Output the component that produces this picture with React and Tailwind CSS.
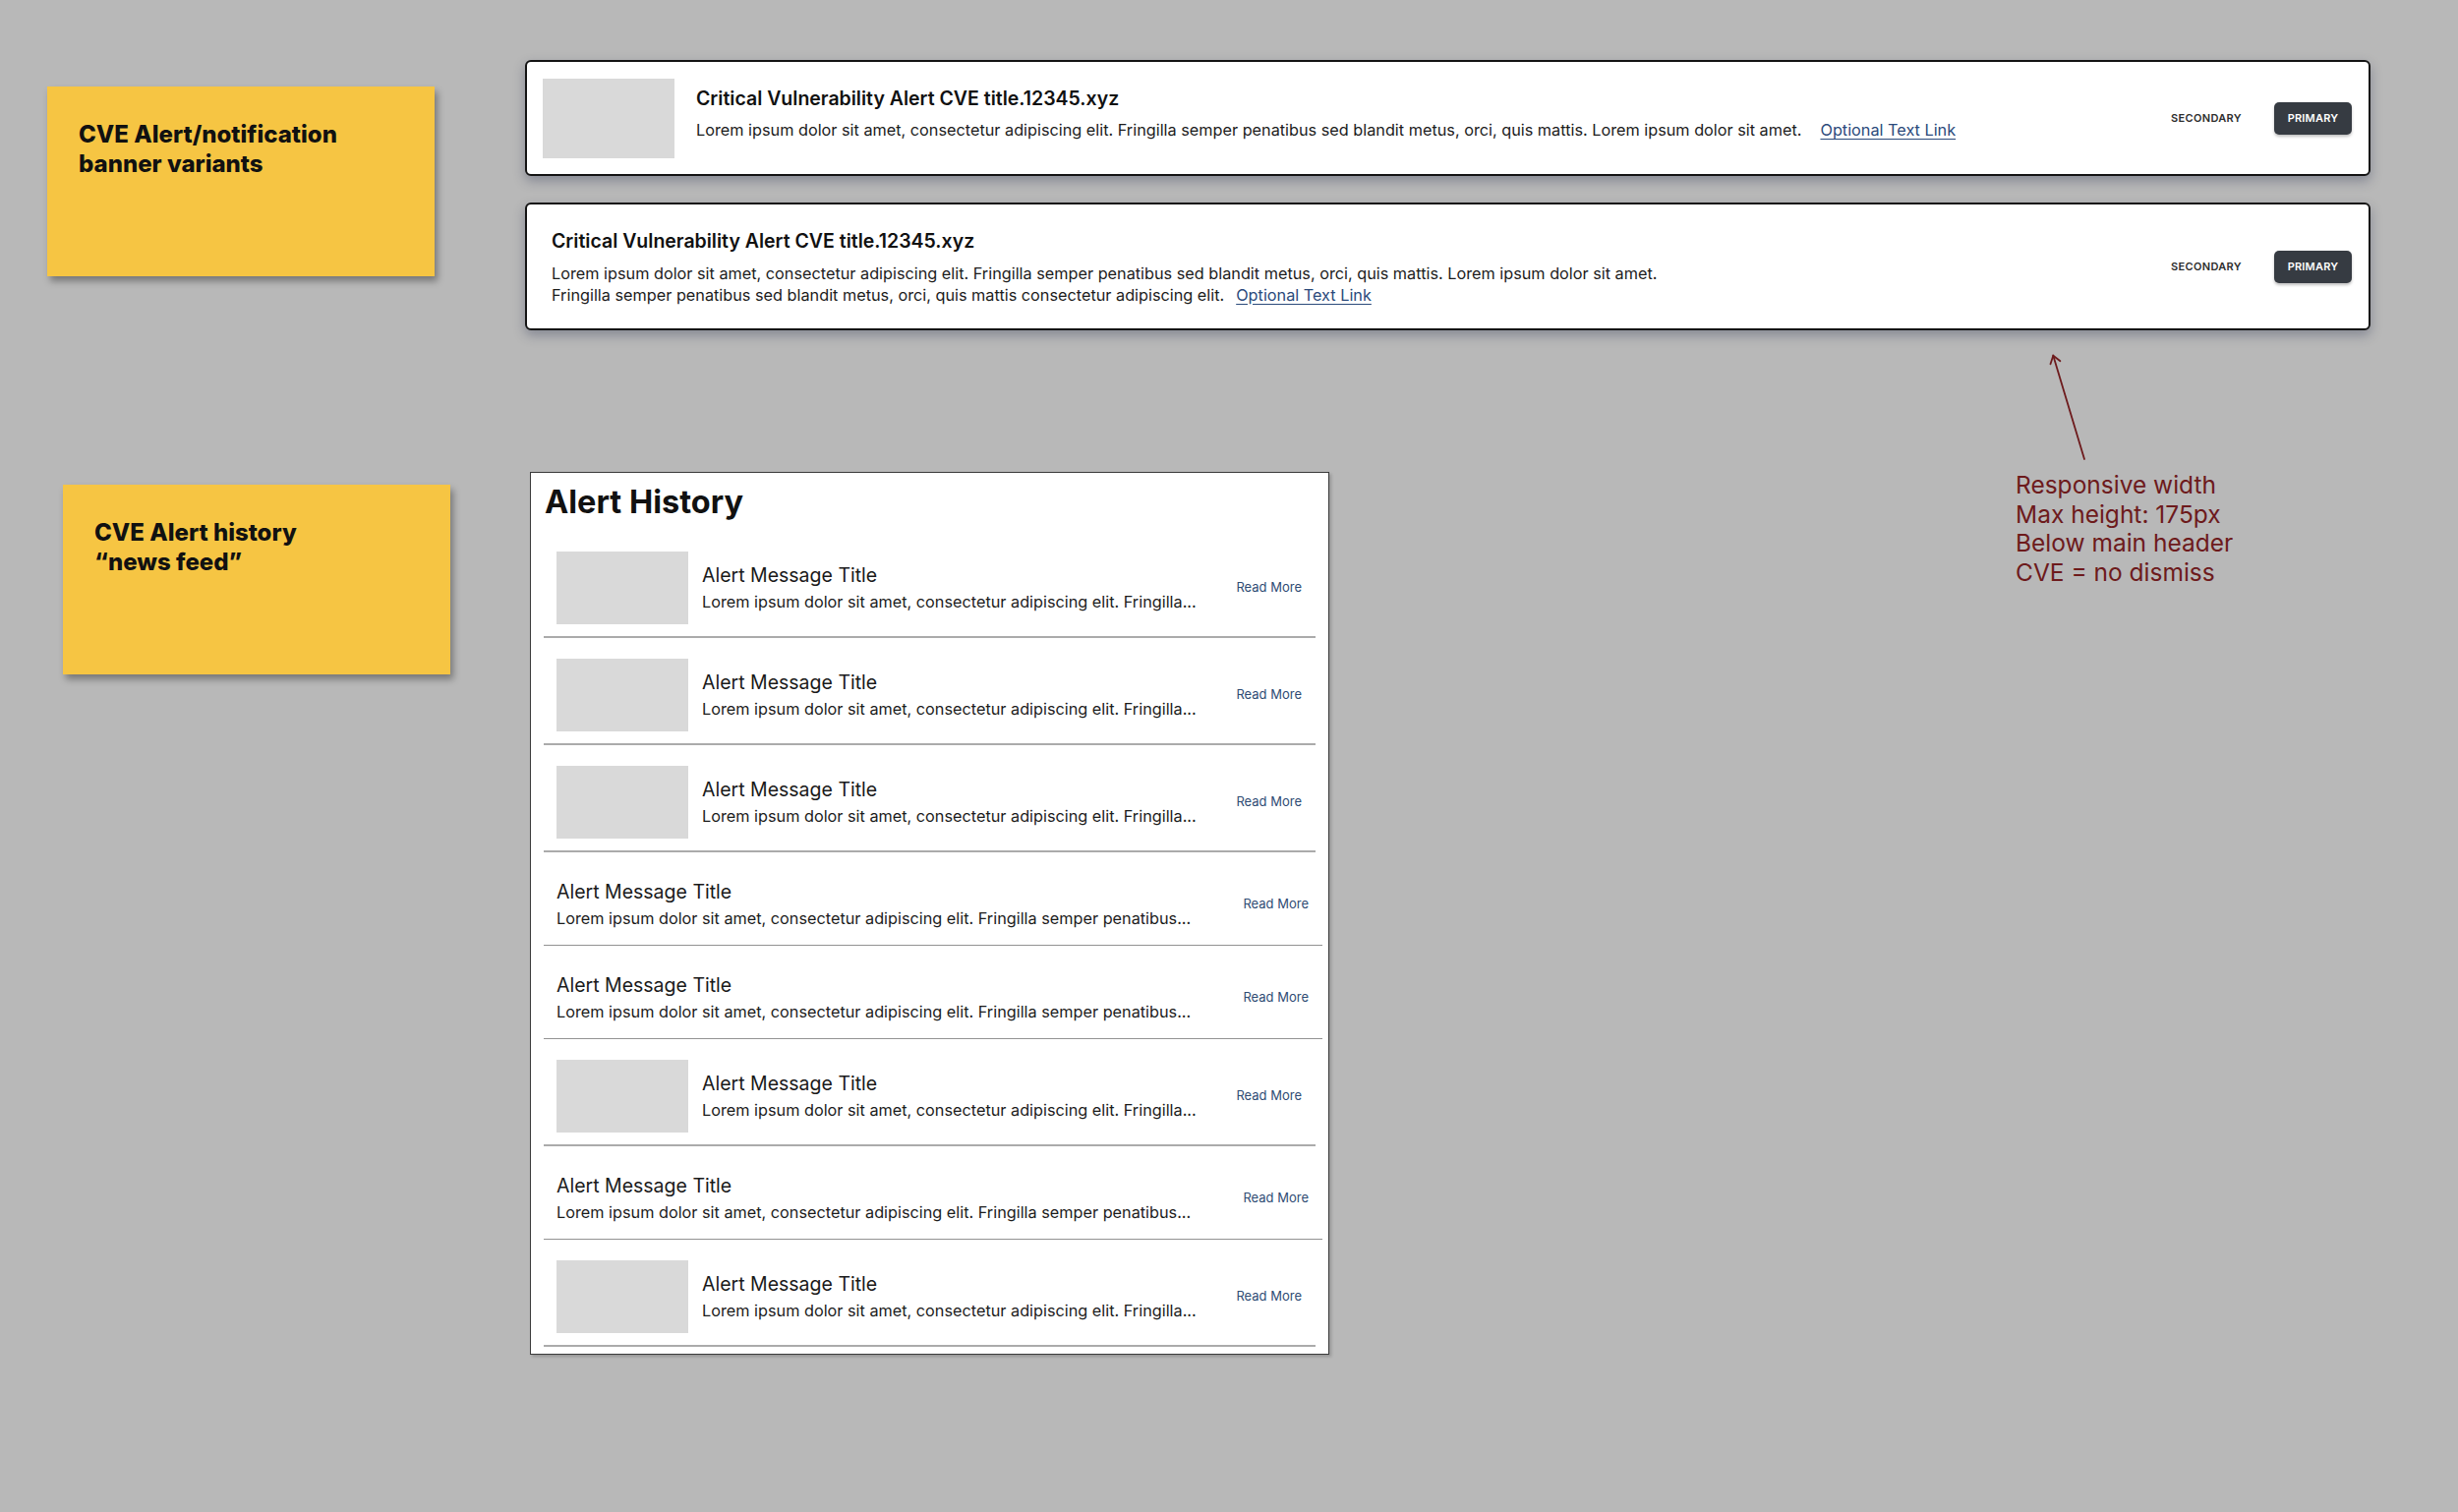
import React from "react";

const LOREM_SHORT =
  "Lorem ipsum dolor sit amet, consectetur adipiscing elit. Fringilla...";
const LOREM_LONG =
  "Lorem ipsum dolor sit amet, consectetur adipiscing elit. Fringilla semper penatibus...";
const LOREM_BANNER =
  "Lorem ipsum dolor sit amet, consectetur adipiscing elit. Fringilla semper penatibus sed blandit metus, orci, quis mattis. Lorem ipsum dolor sit amet.";

const HISTORY = [
  { image: true },
  { image: true },
  { image: true },
  { image: false },
  { image: false },
  { image: true },
  { image: false },
  { image: true },
];

const StickyNote = ({ lines, className }) => (
  <div
    className={`w-[394px] h-[193px] shrink-0 bg-[#f6c543] pt-[34px] pl-8 shadow-[3px_5px_7px_rgba(0,0,0,0.35)] ${className}`}
  >
    {lines.map((l) => (
      <p
        key={l}
        className="text-[24px] leading-[30px] font-extrabold text-[#111]"
      >
        {l}
      </p>
    ))}
  </div>
);

const BannerActions = () => (
  <div className="flex items-center gap-[33px] shrink-0">
    <button className="text-[11px] font-semibold tracking-[0.03em] text-[#2e2e2e]">
      SECONDARY
    </button>
    <button className="h-[33px] w-[79px] rounded-[5px] bg-[#363b42] text-[11px] font-semibold tracking-[0.02em] text-white shadow-[0_2px_3px_rgba(0,0,0,0.25)]">
      PRIMARY
    </button>
  </div>
);

const TextLink = ({ className }) => (
  <a className={`text-[#2b4a7b] underline underline-offset-[3px] ${className}`}>
    Optional Text Link
  </a>
);

const BannerWithImage = () => (
  <div className="h-[118px] flex items-center bg-white border-2 border-[#141414] rounded-[6px] pl-4 pr-[17px] shadow-[0_5px_12px_rgba(40,50,80,0.35)]">
    <div className="w-[134px] h-[81px] bg-[#d9d9d9] shrink-0" />
    <div className="flex-1 ml-[22px] pb-[9px]">
      <p className="text-[19.5px] leading-[24px] font-semibold text-[#111]">
        Critical Vulnerability Alert CVE title.12345.xyz
      </p>
      <p className="mt-[9px] text-[16.25px] leading-[22px] text-[#1c1c1c]">
        {LOREM_BANNER}
        <TextLink className="ml-[19px]" />
      </p>
    </div>
    <BannerActions />
  </div>
);

const BannerTextOnly = () => (
  <div className="h-[130px] flex items-center bg-white border-2 border-[#141414] rounded-[6px] pl-[25px] pr-[17px] shadow-[0_5px_12px_rgba(40,50,80,0.35)]">
    <div className="flex-1 pt-[1px]">
      <p className="text-[19.5px] leading-[24px] font-semibold text-[#111]">
        Critical Vulnerability Alert CVE title.12345.xyz
      </p>
      <p className="mt-[10px] text-[16.25px] leading-[22px] text-[#1c1c1c]">
        {LOREM_BANNER}
        <br />
        Fringilla semper penatibus sed blandit metus, orci, quis mattis
        consectetur adipiscing elit.
        <TextLink className="ml-[12px]" />
      </p>
    </div>
    <BannerActions />
  </div>
);

const HistoryRow = ({ image }) =>
  image ? (
    <div className="flex items-center pl-[13px] pr-[14px] pt-[21px] pb-[12px] border-b-2 border-[#ababab]">
      <div className="w-[134px] h-[74px] bg-[#d9d9d9] shrink-0" />
      <div className="flex-1 ml-[14px]">
        <p className="text-[19.5px] leading-[24px] text-[#1a1a1a]">
          Alert Message Title
        </p>
        <p className="mt-[4px] text-[16.25px] leading-[22px] text-[#1c1c1c]">
          {LOREM_SHORT}
        </p>
      </div>
      <a className="text-[13px] text-[#2f4c74] shrink-0">Read More</a>
    </div>
  ) : (
    <div className="flex items-center -mr-[7px] pl-[13px] pr-[14px] pt-[28px] pb-[16px] border-b-[1.5px] border-[#939393]">
      <div className="flex-1">
        <p className="text-[19.5px] leading-[24px] text-[#1a1a1a]">
          Alert Message Title
        </p>
        <p className="mt-[4px] text-[16.25px] leading-[22px] text-[#1c1c1c]">
          {LOREM_LONG}
        </p>
      </div>
      <a className="text-[13px] text-[#2f4c74] shrink-0">Read More</a>
    </div>
  );

const AlertHistory = () => (
  <div className="w-[813px] shrink-0 bg-white border-[1.5px] border-[#3b3b3b] px-[13px] pt-[10px] pb-[7px] shadow-[2px_2px_3px_rgba(0,0,0,0.2)]">
    <h2 className="pl-px text-[32.5px] leading-[40px] font-bold text-[#111] mb-[9px]">
      Alert History
    </h2>
    {HISTORY.map((r, i) => (
      <HistoryRow key={i} image={r.image} />
    ))}
  </div>
);

const Annotation = () => (
  <div className="shrink-0 text-[#6d1a1c]">
    <svg
      width="45"
      height="110"
      viewBox="0 0 45 110"
      className="block ml-[30px]"
    >
      <g stroke="#6d1a1c" strokeWidth="1.8" fill="none" strokeLinecap="round">
        <path d="M40 107 L8.3 1.7" />
        <path d="M5.5 10.3 L8.3 1.7 L15.4 7.3" />
      </g>
    </svg>
    <div className="mt-[9px] text-[24.5px] leading-[29.5px]">
      <p>Responsive width</p>
      <p>Max height: 175px</p>
      <p>Below main header</p>
      <p>CVE = no dismiss</p>
    </div>
  </div>
);

export default function App() {
  return (
    <div className="w-[2500px] h-[1538px] bg-[#b8b8b8] font-['Inter',sans-serif] pt-[61px] overflow-hidden">
      <section className="flex items-start pl-[48px]">
        <StickyNote
          className="mt-[27px]"
          lines={["CVE Alert/notification", "banner variants"]}
        />
        <div className="ml-[92px] w-[1877px] flex flex-col gap-[27px]">
          <BannerWithImage />
          <BannerTextOnly />
        </div>
      </section>

      <section className="flex items-start pl-[64px] mt-[24px]">
        <StickyNote
          className="mt-[133px]"
          lines={["CVE Alert history", "\u201cnews feed\u201d"]}
        />
        <div className="ml-[81px] mt-[120px]">
          <AlertHistory />
        </div>
        <div className="ml-[698px]">
          <Annotation />
        </div>
      </section>
    </div>
  );
}
